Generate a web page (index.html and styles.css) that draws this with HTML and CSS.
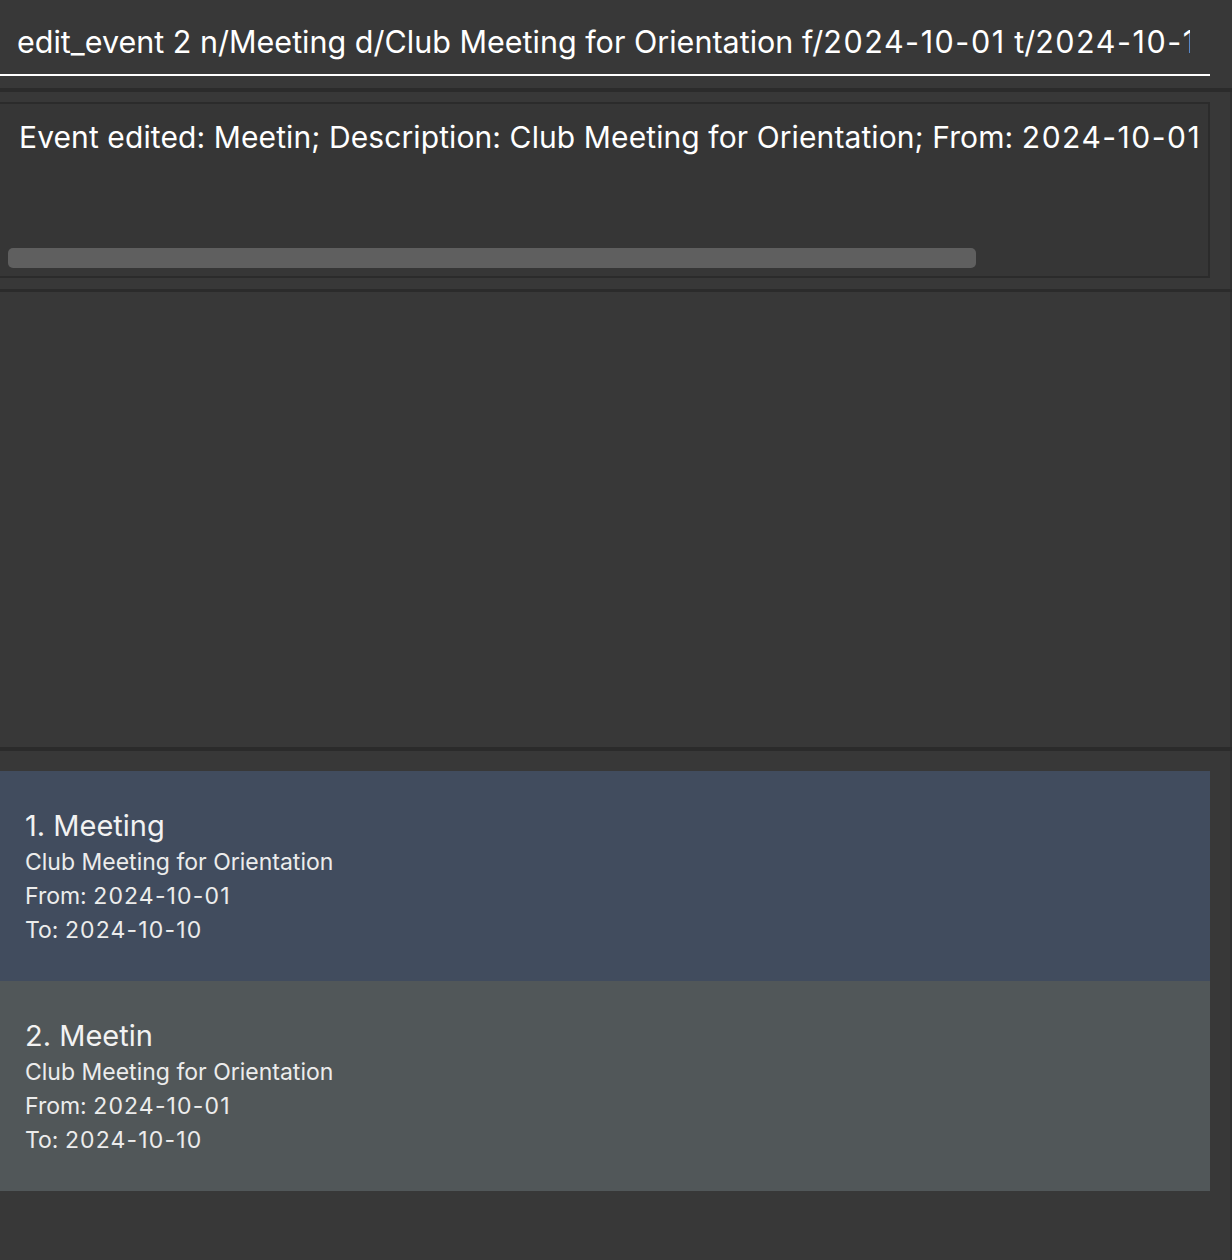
FILE: index.html
```html
<!DOCTYPE html>
<html>
<head>
<meta charset="utf-8">
<link rel="stylesheet" href="styles.css">
</head>
<body>
<div class="app">
  <div class="command">
    <div class="command-field">
      <div class="command-text">edit_event 2 n/Meeting d/Club Meeting for Orientation f/<span class="date">2024-10-01</span> t/<span class="date">2024-10-10</span></div>
    </div>
  </div>
  <div class="sep sep-4"></div>
  <div class="result-pane edge">
    <div class="result-box">
      <div class="result-text">Event edited: Meetin; Description: Club Meeting for Orientation; From: <span class="date">2024-10-01</span></div>
      <div class="scrollbar"><div class="thumb"></div></div>
    </div>
  </div>
  <div class="sep sep-3"></div>
  <div class="empty edge"></div>
  <div class="sep sep-4"></div>
  <div class="list edge">
    <div class="card card-selected">
      <div class="card-title">1. Meeting</div>
      <div class="card-line">Club Meeting for Orientation</div>
      <div class="card-line">From: <span class="date">2024-10-01</span></div>
      <div class="card-line">To: <span class="date">2024-10-10</span></div>
    </div>
    <div class="card card-odd">
      <div class="card-title">2. Meetin</div>
      <div class="card-line">Club Meeting for Orientation</div>
      <div class="card-line">From: <span class="date">2024-10-01</span></div>
      <div class="card-line">To: <span class="date">2024-10-10</span></div>
    </div>
  </div>
</div>
</body>
</html>
```

FILE: styles.css
```css
html, body {
  margin: 0;
  padding: 0;
  background: #383838;
}
body {
  font-family: Inter, "Noto Sans", sans-serif;
  color: #ffffff;
}
.app {
  width: 1232px;
  height: 1260px;
  display: flex;
  flex-direction: column;
  overflow: hidden;
  background: #383838;
}
.edge {
  border-right: 2px solid #303030;
}
.date {
  letter-spacing: 0.05em;
}
.command {
  height: 88px;
  flex: none;
  box-sizing: border-box;
  padding-top: 23px;
  padding-right: 22px;
}
.command-field {
  height: 51px;
  border-bottom: 2px solid #ffffff;
  padding-left: 17px;
  padding-right: 20px;
}
.command-text {
  font-size: 30.5px;
  line-height: 38px;
  white-space: nowrap;
  overflow: hidden;
  color: #ffffff;
}
.sep {
  flex: none;
  background: #2b2b2b;
}
.sep-4 { height: 4px; }
.sep-3 { height: 3px; }
.result-pane {
  flex: none;
  height: 197px;
  box-sizing: border-box;
  padding: 10px 20px 11px 0;
}
.result-box {
  height: 176px;
  box-sizing: border-box;
  border: 2px solid #2b2b2b;
  border-left: none;
  background: #363636;
  position: relative;
  overflow: hidden;
}
.result-text {
  padding-left: 19px;
  padding-top: 14px;
  font-size: 30px;
  letter-spacing: 0.1px;
  line-height: 38px;
  white-space: nowrap;
}
.scrollbar {
  position: absolute;
  left: 8px;
  right: 0;
  top: 144px;
  height: 20px;
}
.thumb {
  width: 968px;
  height: 20px;
  border-radius: 5px;
  background: #5f5f5f;
}
.empty {
  flex: none;
  height: 455px;
}
.list {
  flex: 1;
  padding-top: 20px;
  padding-right: 20px;
}
.card {
  height: 210px;
  box-sizing: border-box;
  padding: 38px 0 0 25px;
  color: #ececec;
}
.card-selected { background: #414c5e; }
.card-odd { background: #515759; }
.card-title {
  font-size: 29px;
  line-height: 34px;
  margin-bottom: 2px;
  color: #f2f2f2;
}
.card-line {
  font-size: 23px;
  line-height: 34px;
}
```
